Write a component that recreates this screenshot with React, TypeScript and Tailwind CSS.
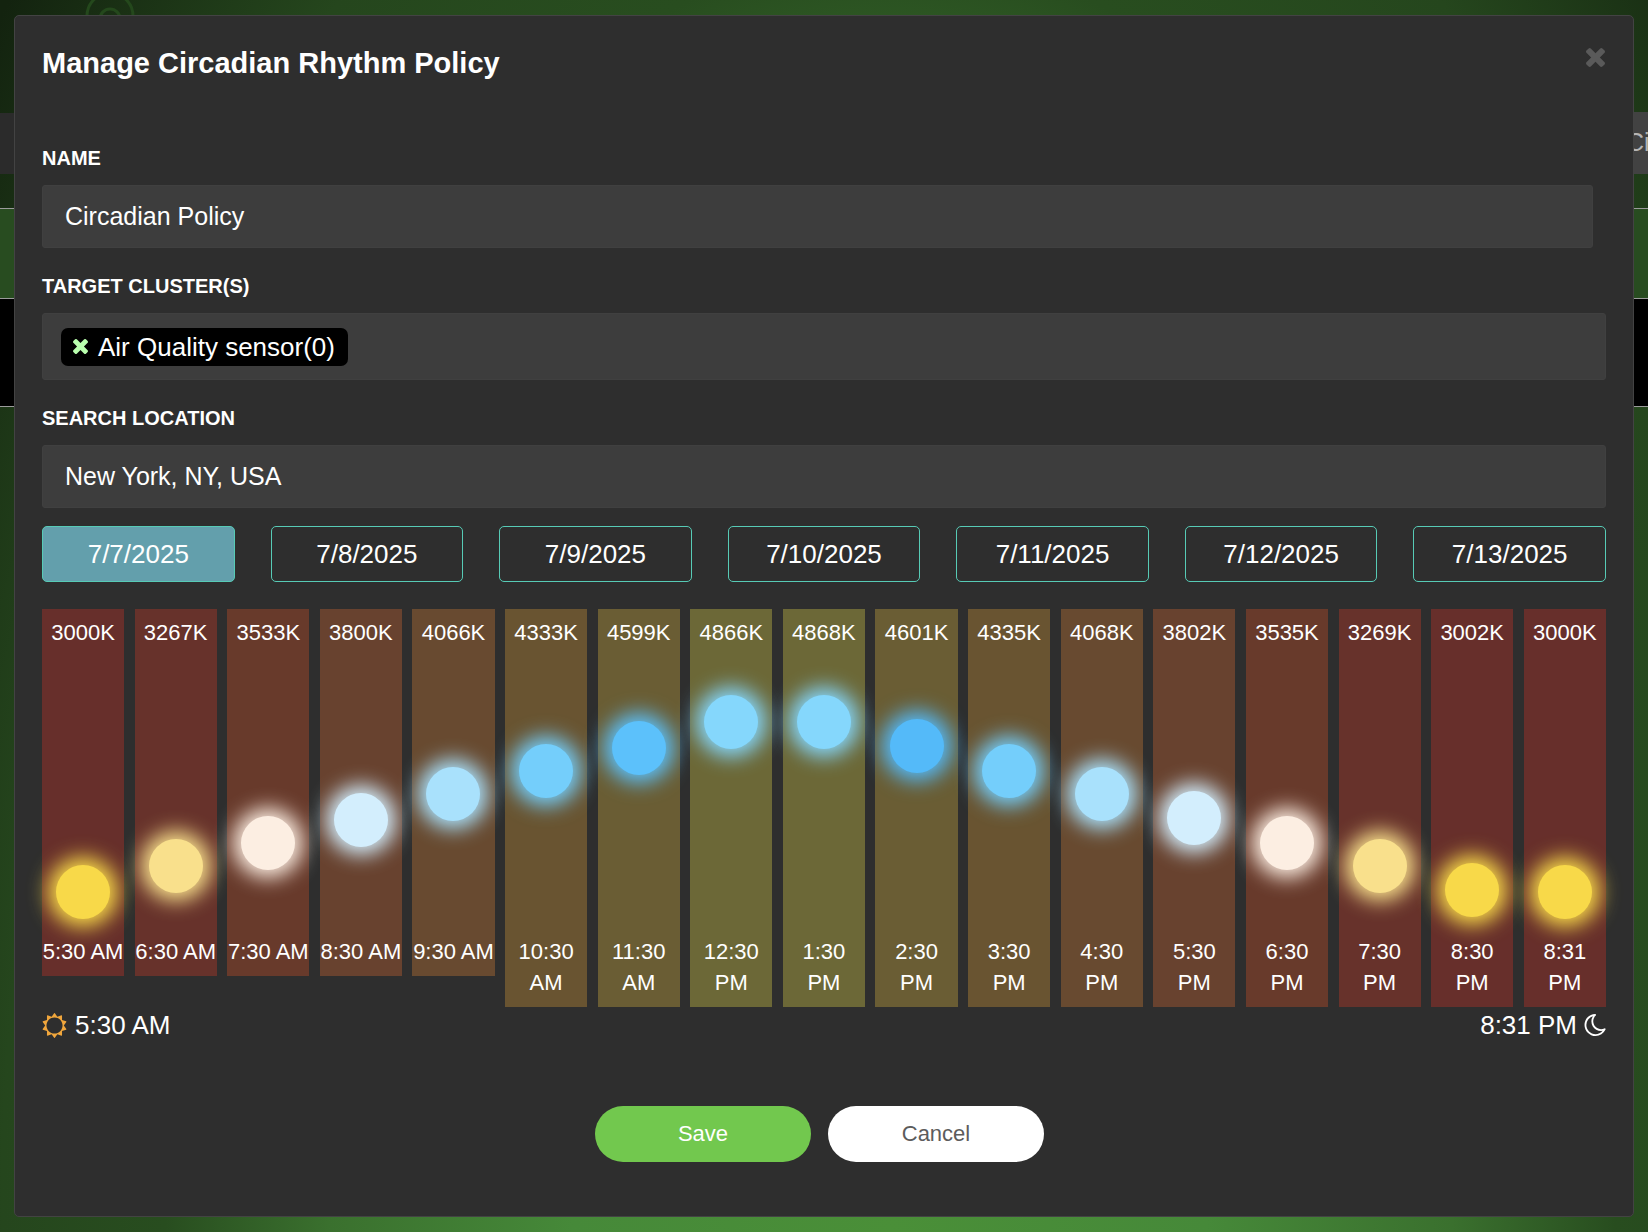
import React from "react";

type Slot = {
  kelvin: string;
  hour: string;
  period: "AM" | "PM";
  wrap: boolean;
  bar: string;
  light: string;
  offset: number;
};

const slots: Slot[] = [
  { kelvin: "3000K", hour: "5:30", period: "AM", wrap: false, bar: "#672f2b", light: "#f8d949", offset: 217 },
  { kelvin: "3267K", hour: "6:30", period: "AM", wrap: false, bar: "#67322b", light: "#f9e08c", offset: 191 },
  { kelvin: "3533K", hour: "7:30", period: "AM", wrap: false, bar: "#683a2b", light: "#fceee2", offset: 168 },
  { kelvin: "3800K", hour: "8:30", period: "AM", wrap: false, bar: "#68422f", light: "#d3eefd", offset: 145 },
  { kelvin: "4066K", hour: "9:30", period: "AM", wrap: false, bar: "#684a30", light: "#a9e1fc", offset: 119 },
  { kelvin: "4333K", hour: "10:30", period: "AM", wrap: true, bar: "#695431", light: "#74cefb", offset: 96 },
  { kelvin: "4599K", hour: "11:30", period: "AM", wrap: true, bar: "#6a5d34", light: "#5cc1fb", offset: 73 },
  { kelvin: "4866K", hour: "12:30", period: "PM", wrap: true, bar: "#6c6837", light: "#85d7fc", offset: 47 },
  { kelvin: "4868K", hour: "1:30", period: "PM", wrap: true, bar: "#6c6837", light: "#85d7fc", offset: 47 },
  { kelvin: "4601K", hour: "2:30", period: "PM", wrap: true, bar: "#6a5d34", light: "#54baf9", offset: 71 },
  { kelvin: "4335K", hour: "3:30", period: "PM", wrap: true, bar: "#695431", light: "#74cefb", offset: 96 },
  { kelvin: "4068K", hour: "4:30", period: "PM", wrap: true, bar: "#684a30", light: "#a9e1fc", offset: 119 },
  { kelvin: "3802K", hour: "5:30", period: "PM", wrap: true, bar: "#68422f", light: "#d3eefd", offset: 143 },
  { kelvin: "3535K", hour: "6:30", period: "PM", wrap: true, bar: "#683a2b", light: "#fceee2", offset: 168 },
  { kelvin: "3269K", hour: "7:30", period: "PM", wrap: true, bar: "#67322b", light: "#f9e08c", offset: 191 },
  { kelvin: "3002K", hour: "8:30", period: "PM", wrap: true, bar: "#672f2b", light: "#f8d949", offset: 215 },
  { kelvin: "3000K", hour: "8:31", period: "PM", wrap: true, bar: "#672f2b", light: "#f8d949", offset: 217 },
];

const dates = ["7/7/2025", "7/8/2025", "7/9/2025", "7/10/2025", "7/11/2025", "7/12/2025", "7/13/2025"];

function TimesIcon({ className }: { className: string }) {
  return (
    <svg viewBox="302 366 1188 1188" className={className} fill="currentColor" aria-hidden="true">
      <path d="M1490 1322q0 40-28 68l-136 136q-28 28-68 28t-68-28l-294-294-294 294q-28 28-68 28t-68-28l-136-136q-28-28-28-68t28-68l294-294-294-294q-28-28-28-68t28-68l136-136q28-28 68-28t68 28l294 294 294-294q28-28 68-28t68 28l136 136q28 28 28 68t-28 68l-294 294 294 294q28 28 28 68z" />
    </svg>
  );
}

function SunIcon() {
  return (
    <svg viewBox="0 0 1792 1792" className="size-[25px] text-[#f0a63c]" fill="currentColor" aria-hidden="true">
      <path d="M1472 896q0-117-45.5-223.5t-123-184-184-123-223.5-45.5-223.5 45.5-184 123-123 184-45.5 223.5 45.5 223.5 123 184 184 123 223.5 45.5 223.5-45.5 184-123 123-184 45.5-223.5zm276 277q-4 15-20 20l-292 96v306q0 16-13 26-15 10-29 4l-292-94-180 248q-10 13-26 13t-26-13l-180-248-292 94q-14 6-29-4-13-10-13-26v-306l-292-96q-16-5-20-20-5-17 4-29l180-248-180-248q-9-13-4-29 4-15 20-20l292-96v-306q0-16 13-26 15-10 29-4l292 94 180-248q9-12 26-12t26 12l180 248 292-94q14-6 29 4 13 10 13 26v306l292 96q16 5 20 20 5 16-4 29l-180 248 180 248q9 12 4 29z" />
    </svg>
  );
}

function MoonIcon() {
  return (
    <svg viewBox="110 128 1500 1536" className="h-[22px] w-[22px]" fill="currentColor" aria-hidden="true">
      <path d="M1390 1303q-54 9-110 9-182 0-337-90t-245-245-90-337q0-192 104-357-201 60-328.5 229t-127.5 384q0 130 51 248.5t136.5 204 204 136.5 248.5 51q144 0 273.5-61.5t220.5-171.5zm203-85q-94 203-283.5 324.5t-413.5 121.5q-156 0-298-61t-245-164-164-245-61-298q0-153 57.5-292.5t156-241.5 235.5-164.5 290-68.5q44-2 61 39 18 41-15 72-86 78-131.5 181.5t-45.5 218.5q0 148 73 273t198 198 273 73q118 0 228-51 41-18 72 13 14 14 17.5 34t-4.5 38z" />
    </svg>
  );
}

function Backdrop() {
  return (
    <div
      aria-hidden="true"
      className="absolute inset-0 overflow-hidden bg-[radial-gradient(55%_130%_at_54%_100%,#4a8f38_0%,#468939_35%,#3a702e_62%,#284d1f_80%,#25461d_98%,#13230f_124%)]"
    >
      <svg viewBox="0 0 50 40" className="absolute -top-2 left-[85px] h-10 w-[50px]" fill="none" stroke="#24481c" strokeWidth="3">
        <circle cx="25" cy="24" r="23" />
        <circle cx="25" cy="27" r="10" />
      </svg>
      <div className="mt-28 flex h-[62px] justify-between">
        <div className="mt-px w-20 bg-[#2b2b2b]" />
        <div className="w-12 bg-[#424242] pl-[26px] text-[25px] leading-[60px] text-[#b5b5b5]">Ci</div>
      </div>
      <div className="mt-[34px] h-[91px] border-y border-[#9b9b9b] bg-[#284c20]" />
      <div className="h-[108px] border-b border-[#9b9b9b] bg-black" />
    </div>
  );
}

const labelClass = "mb-3 block w-fit text-[20px] leading-[29px] font-bold";
const fieldClass =
  "block h-[63px] rounded-[3px] border border-[#404040] bg-[#3d3d3d] px-[22px] text-[25px] text-white outline-none";

function DaylightColumn({ slot }: { slot: Slot }) {
  return (
    <li className="w-[5.25%] pt-2 pb-[9px] text-center text-[22px] leading-[31px]" style={{ backgroundColor: slot.bar }}>
      <div>{slot.kelvin}</div>
      <div className="flow-root h-[288px]">
        <div
          className="mx-auto size-[54px] rounded-full shadow-[0_0_20px_8px_currentColor]"
          style={{ marginTop: slot.offset, backgroundColor: slot.light, color: slot.light }}
        />
      </div>
      <div className="whitespace-nowrap">
        {slot.hour}
        {slot.wrap ? <br /> : " "}
        {slot.period}
      </div>
    </li>
  );
}

export default function App() {
  const [date, setDate] = React.useState(dates[0]);
  return (
    <div className="relative flow-root min-h-screen bg-[#1d3518] font-['Liberation_Sans',Arial,sans-serif]">
      <Backdrop />
      <form
        role="dialog"
        aria-labelledby="dialog-title"
        onSubmit={(e) => e.preventDefault()}
        className="relative mx-[14px] mt-[15px] mb-[15px] rounded-[5px] border border-[#434343] bg-[#2e2e2e] px-[27px] pt-[27px] pb-[54px] text-white"
      >
        <header className="mb-[61px] flex items-start justify-between">
          <h1 id="dialog-title" className="text-[29px] leading-10 font-bold">
            Manage Circadian Rhythm Policy
          </h1>
          <button type="button" aria-label="Close" className="mt-[5px] mr-px text-[#5a5a5a]">
            <TimesIcon className="size-[19px]" />
          </button>
        </header>

        <div className="mb-6 pr-[13px]">
          <label htmlFor="name" className={labelClass}>
            NAME
          </label>
          <input id="name" type="text" defaultValue="Circadian Policy" className={`${fieldClass} w-full`} />
        </div>

        <div className="mb-6" role="group" aria-labelledby="clusters">
          <div id="clusters" className={labelClass}>
            TARGET CLUSTER(S)
          </div>
          <div className="flex h-[67px] items-center rounded-[3px] border border-[#404040] bg-[#3d3d3d] px-[18px]">
            <div className="flex h-[38px] items-center gap-[10px] rounded-[7px] bg-black pr-[13px] pl-3">
              <button type="button" aria-label="Remove Air Quality sensor" className="text-[#b9ffae]">
                <TimesIcon className="size-[15px]" />
              </button>
              <span className="text-[26px] leading-9">Air Quality sensor(0)</span>
            </div>
          </div>
        </div>

        <div>
          <label htmlFor="location" className={labelClass}>
            SEARCH LOCATION
          </label>
          <input id="location" type="text" defaultValue="New York, NY, USA" className={`${fieldClass} w-full`} />
        </div>

        <div className="mt-[18px] grid grid-cols-7 gap-9">
          {dates.map((d) => (
            <button
              key={d}
              type="button"
              aria-pressed={d === date}
              onClick={() => setDate(d)}
              className={`h-14 rounded-[5px] border border-[#57cbb6] text-[26px] ${d === date ? "bg-[#639fac]" : ""}`}
            >
              {d}
            </button>
          ))}
        </div>

        <ul className="mt-[27px] flex items-start justify-between">
          {slots.map((slot, i) => (
            <DaylightColumn key={i} slot={slot} />
          ))}
        </ul>

        <div className="flex justify-between text-[26px] leading-9">
          <div className="flex items-center gap-2">
            <SunIcon />
            5:30 AM
          </div>
          <div className="flex items-center gap-[7px]">
            8:31 PM
            <MoonIcon />
          </div>
        </div>

        <div className="mt-[63px] flex justify-center gap-[17px] pr-[9px] text-[22px]">
          <button type="submit" className="h-14 w-[216px] rounded-full bg-[#72c84e] pb-0.5 text-white">
            Save
          </button>
          <button type="button" className="h-14 w-[216px] rounded-full bg-white pb-0.5 text-[#5c5c5c]">
            Cancel
          </button>
        </div>
      </form>
    </div>
  );
}
